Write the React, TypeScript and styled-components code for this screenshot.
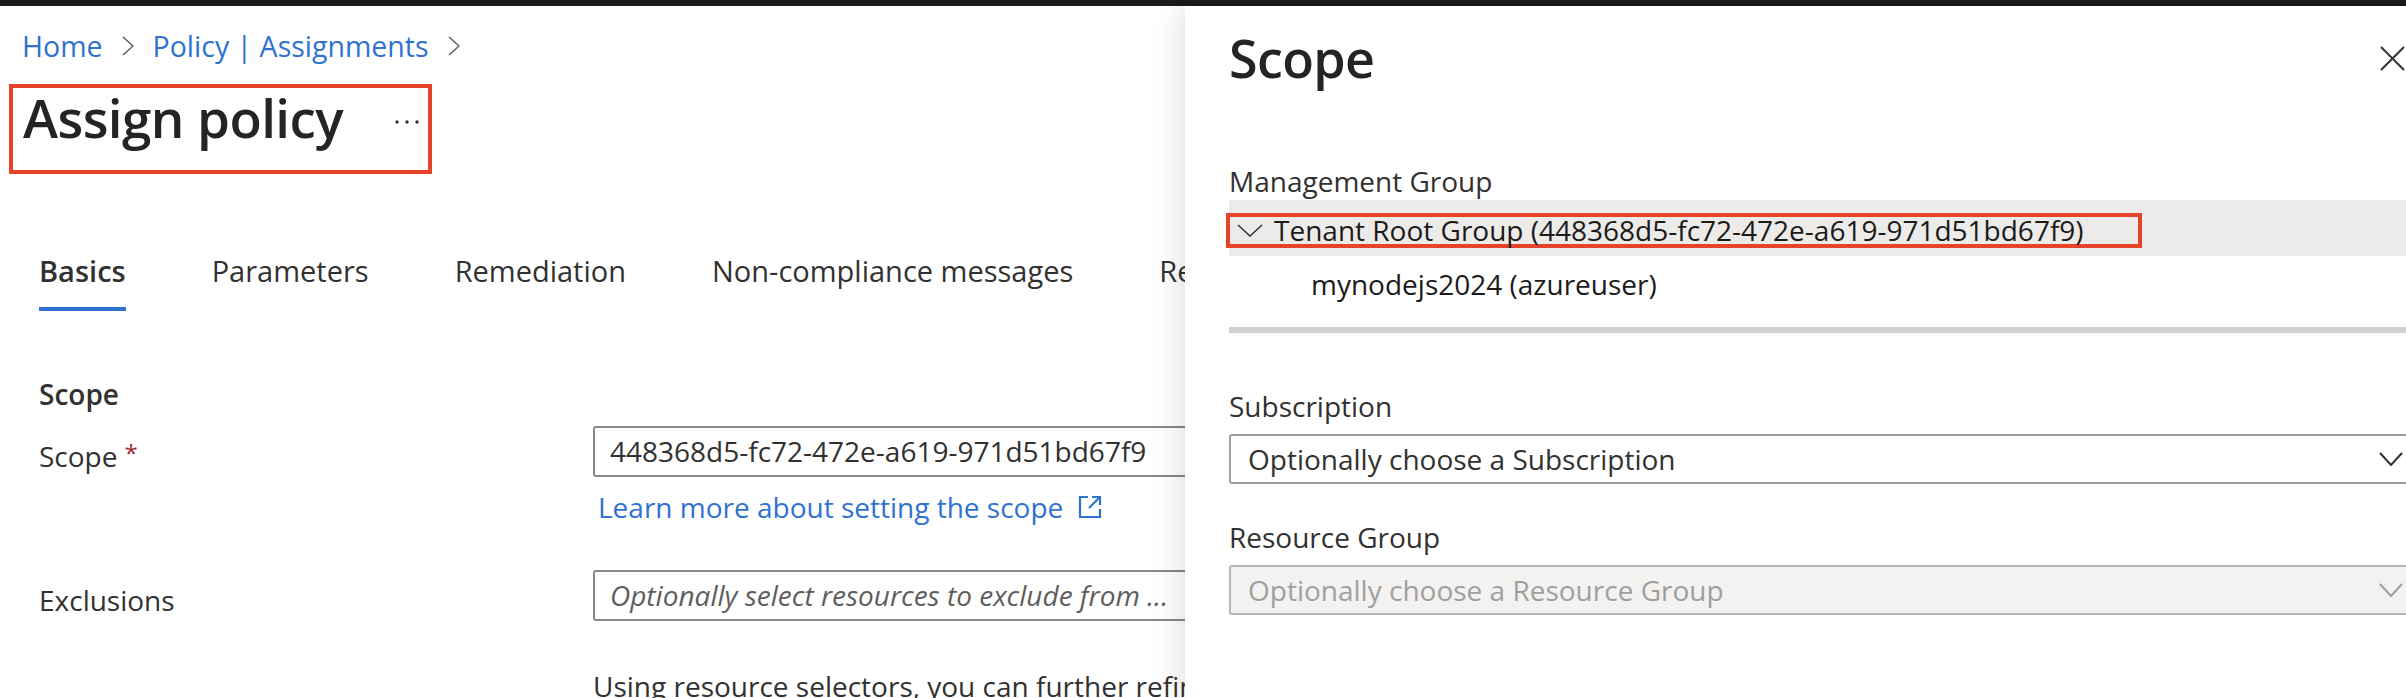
import React from 'react';
import styled, { createGlobalStyle } from 'styled-components';

const GlobalStyle = createGlobalStyle`
  html, body {
    margin: 0;
    padding: 0;
    background: #fff;
  }
  body {
    font-family: 'Segoe UI', 'Open Sans', sans-serif;
    color: #323130;
    overflow: hidden;
  }
`;

const LINK = '#2f72d0';
const ANNOTATION = '#e5432a';

const Chevron = ({ w, h, color, stroke = 1.6 }: { w: number; h: number; color: string; stroke?: number }) => (
  <svg width={w} height={h} viewBox={`0 0 ${w} ${h}`} fill="none">
    <polyline points={`1,1 ${w / 2},${h - 1} ${w - 1},1`} stroke={color} strokeWidth={stroke} />
  </svg>
);

const CrumbChevron = () => (
  <svg width="12" height="20" viewBox="0 0 12 20" fill="none">
    <polyline points="1,1 11,10 1,19" stroke="#605e5c" strokeWidth="1.5" />
  </svg>
);

const MoreDots = () => (
  <svg width="24" height="4" viewBox="0 0 24 4">
    <circle cx="2" cy="2" r="1.7" fill="#323130" />
    <circle cx="12" cy="2" r="1.7" fill="#323130" />
    <circle cx="22" cy="2" r="1.7" fill="#323130" />
  </svg>
);

const ExternalIcon = () => (
  <svg width="24" height="24" viewBox="0 0 24 24" fill="none" stroke={LINK} strokeWidth="2.2">
    <path d="M10 2H2v20h20v-8" />
    <path d="M14 2h8v8" />
    <path d="M22 2 11 13" />
  </svg>
);

const CloseIcon = () => (
  <svg width="25" height="25" viewBox="0 0 25 25" fill="none" stroke="#323130" strokeWidth="2">
    <line x1="1" y1="1" x2="24" y2="24" />
    <line x1="24" y1="1" x2="1" y2="24" />
  </svg>
);

const App = () => (
  <Page>
    <GlobalStyle />
    <TopBar />
    <Main>
      <Breadcrumb>
        <Crumb>Home</Crumb>
        <CrumbChevron />
        <Crumb>Policy | Assignments</Crumb>
        <CrumbChevron />
      </Breadcrumb>
      <TitleBox>
        <Title>Assign policy</Title>
        <DotsWrap>
          <MoreDots />
        </DotsWrap>
      </TitleBox>
      <Tabs>
        <Tab active>Basics</Tab>
        <Tab>Parameters</Tab>
        <Tab>Remediation</Tab>
        <Tab>Non-compliance messages</Tab>
        <Tab>Review + create</Tab>
      </Tabs>
      <SectionTitle>Scope</SectionTitle>
      <FormRow top={12}>
        <Label>
          Scope<Required>*</Required>
        </Label>
        <Field>
          <TextBox>448368d5-fc72-472e-a619-971d51bd67f9</TextBox>
          <LinkRow>
            Learn more about setting the scope
            <ExternalIcon />
          </LinkRow>
        </Field>
      </FormRow>
      <FormRow top={43}>
        <Label>Exclusions</Label>
        <Field>
          <TextBox placeholder>Optionally select resources to exclude from ...</TextBox>
        </Field>
      </FormRow>
      <FormRow top={45}>
        <span />
        <Paragraph>Using resource selectors, you can further refine</Paragraph>
      </FormRow>
    </Main>

    <Blade>
      <BladeHeader>
        <BladeTitle>Scope</BladeTitle>
        <CloseButton>
          <CloseIcon />
        </CloseButton>
      </BladeHeader>
      <FieldLabel top={73}>Management Group</FieldLabel>
      <Tree>
        <TreeRow selected>
          <SelectedNode>
            <Chevron w={26} h={13} color="#323130" stroke={1.5} />
            Tenant Root Group (448368d5-fc72-472e-a619-971d51bd67f9)
          </SelectedNode>
        </TreeRow>
        <ChildNode>mynodejs2024 (azureuser)</ChildNode>
        <ScrollTrack />
      </Tree>
      <FieldLabel top={53}>Subscription</FieldLabel>
      <Dropdown>
        Optionally choose a Subscription
        <Chevron w={24} h={14} color="#323130" stroke={2} />
      </Dropdown>
      <FieldLabel top={33}>Resource Group</FieldLabel>
      <Dropdown disabled>
        Optionally choose a Resource Group
        <Chevron w={24} h={14} color="#a19f9d" stroke={2} />
      </Dropdown>
    </Blade>
  </Page>
);

const Page = styled.div`
  position: relative;
  width: 2406px;
  height: 698px;
  overflow: hidden;
  background: #fff;
`;

const TopBar = styled.div`
  height: 6px;
  background: #1b1b1b;
`;

const Main = styled.main`
  width: 1185px;
  overflow: hidden;
  display: flex;
  flex-direction: column;
  align-items: flex-start;

  & > * {
    flex-shrink: 0;
  }
`;

const Breadcrumb = styled.nav`
  display: flex;
  align-items: center;
  gap: 19px;
  padding: 20px 0 0 22px;
  height: 40px;
  font-size: 28.5px;
  line-height: 40px;
`;

const Crumb = styled.span`
  color: ${LINK};
`;

const TitleBox = styled.div`
  box-sizing: border-box;
  width: 423px;
  height: 90px;
  margin: 18px 0 0 9px;
  border: 4px solid ${ANNOTATION};
  padding: 0 9px 0 10px;
  display: flex;
  align-items: flex-start;
  justify-content: space-between;
`;

const Title = styled.h1`
  margin: 0;
  font-size: 53px;
  font-weight: 600;
  line-height: 60px;
  letter-spacing: -0.6px;
  color: #252423;
`;

const DotsWrap = styled.div`
  height: 60px;
  display: flex;
  align-items: center;
  padding-top: 4px;
`;

const Tabs = styled.div`
  align-self: stretch;
  display: flex;
  gap: 86px;
  margin-top: 77px;
  padding-left: 39px;
  overflow: hidden;
`;

const Tab = styled.div<{ active?: boolean }>`
  flex-shrink: 0;
  font-size: 29px;
  line-height: 40px;
  padding-bottom: 16px;
  border-bottom: 4px solid ${(p) => (p.active ? LINK : 'transparent')};
  font-weight: ${(p) => (p.active ? 600 : 400)};
  color: #323130;
  white-space: nowrap;

  &:last-child {
    flex-shrink: 1;
    min-width: 0;
    overflow: hidden;
  }
`;

const SectionTitle = styled.h2`
  margin: 63px 0 0 39px;
  font-size: 28px;
  font-weight: 600;
  line-height: 40px;
  color: #323130;
`;

const FormRow = styled.div<{ top: number }>`
  display: grid;
  grid-template-columns: 554px 640px;
  margin-top: ${(p) => p.top}px;
  padding-left: 39px;
`;

const Label = styled.div`
  padding-top: 10px;
  font-size: 28px;
  line-height: 40px;
`;

const Required = styled.span`
  color: #a4262c;
  font-size: 24px;
  margin-left: 7px;
  vertical-align: top;
  line-height: 34px;
`;

const Field = styled.div`
  display: flex;
  flex-direction: column;
  align-items: flex-start;
`;

const TextBox = styled.div<{ placeholder?: boolean }>`
  box-sizing: border-box;
  width: 640px;
  height: 51px;
  border: 2px solid #8a8886;
  border-radius: 3px;
  padding: 0 15px;
  font-size: 28px;
  line-height: 47px;
  white-space: nowrap;
  overflow: hidden;
  color: ${(p) => (p.placeholder ? '#605e5c' : '#323130')};
  font-style: ${(p) => (p.placeholder ? 'italic' : 'normal')};
`;

const LinkRow = styled.a`
  display: flex;
  align-items: center;
  gap: 15px;
  margin: 10px 0 0 5px;
  font-size: 28px;
  line-height: 40px;
  color: ${LINK};
  white-space: nowrap;
`;

const Paragraph = styled.p`
  margin: 0;
  font-size: 28px;
  line-height: 40px;
  white-space: nowrap;
  color: #323130;
`;

const Blade = styled.aside`
  position: absolute;
  top: 6px;
  left: 1185px;
  bottom: 0;
  width: 1250px;
  box-sizing: border-box;
  padding: 22px 20px 0 44px;
  background: #fff;
  box-shadow: 0 0 32px rgba(0, 0, 0, 0.16);
  display: flex;
  flex-direction: column;
`;

const BladeHeader = styled.div`
  display: flex;
  align-items: center;
  justify-content: space-between;
  height: 60px;
`;

const BladeTitle = styled.h2`
  margin: 0;
  font-size: 52px;
  font-weight: 600;
  line-height: 60px;
  letter-spacing: -0.6px;
  color: #252423;
`;

const CloseButton = styled.button`
  display: flex;
  background: none;
  border: none;
  padding: 0;
  margin-right: 10px;
`;

const FieldLabel = styled.div<{ top: number }>`
  margin-top: ${(p) => p.top}px;
  font-size: 28px;
  line-height: 40px;
  color: #323130;
`;

const Tree = styled.div`
  display: flex;
  flex-direction: column;
  margin-top: -1px;
`;

const TreeRow = styled.div<{ selected?: boolean }>`
  padding: 13px 0 8px 0;
  background: ${(p) => (p.selected ? '#edebe9' : 'transparent')};
`;

const SelectedNode = styled.div`
  display: inline-flex;
  align-items: center;
  gap: 11px;
  box-sizing: border-box;
  height: 35px;
  margin-left: -3px;
  padding: 0 54px 0 7px;
  border: 4px solid ${ANNOTATION};
  font-size: 28px;
  line-height: 27px;
  color: #1b1a19;
  white-space: nowrap;
`;

const ChildNode = styled.div`
  padding: 14px 0 29px 82px;
  font-size: 28px;
  line-height: 28px;
  color: #1b1a19;
`;

const ScrollTrack = styled.div`
  height: 6px;
  background: #d2d0ce;
`;

const Dropdown = styled.div<{ disabled?: boolean }>`
  box-sizing: border-box;
  height: 50px;
  margin-top: 8px;
  display: flex;
  align-items: center;
  justify-content: space-between;
  padding: 0 10px 0 17px;
  border: 2px solid ${(p) => (p.disabled ? '#b8b6b4' : '#a19f9d')};
  border-radius: 3px;
  background: ${(p) => (p.disabled ? '#f3f2f1' : '#fff')};
  color: ${(p) => (p.disabled ? '#a19f9d' : '#323130')};
  font-size: 28px;
  line-height: 46px;
  white-space: nowrap;
`;

export default App;
